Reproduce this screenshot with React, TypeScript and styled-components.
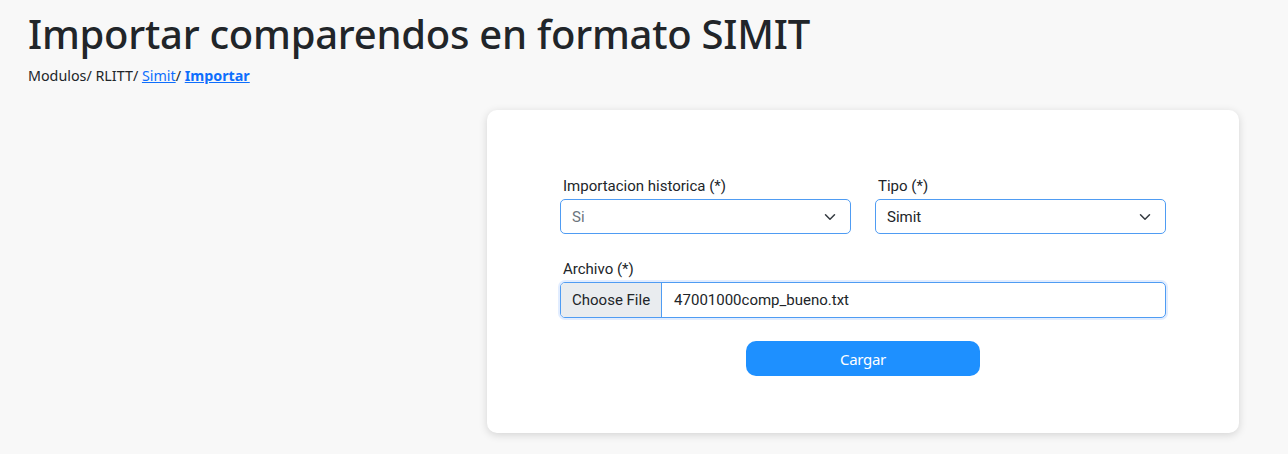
import styled, { createGlobalStyle } from "styled-components";

const GlobalStyle = createGlobalStyle`
  html, body {
    margin: 0;
    padding: 0;
    background: #f8f8f8;
  }
  body {
    font-family: "Noto Sans", "Open Sans", sans-serif;
    color: #212529;
  }
  * {
    box-sizing: border-box;
  }
`;

const Page = styled.div`
  min-height: 454px;
  padding: 6px 49px 0 28px;
`;

const Title = styled.h1`
  margin: 0;
  font-family: "Noto Sans", sans-serif;
  font-weight: 500;
  font-size: 40px;
  line-height: 56px;
  color: #212529;
  letter-spacing: -0.25px;
`;

const Breadcrumb = styled.div`
  margin-top: 4px;
  font-family: "Noto Sans", sans-serif;
  font-size: 14.3px;
  line-height: 20px;
  color: #212529;
`;

const Crumb = styled.a<{ $current?: boolean }>`
  color: #0d6efd;
  text-decoration: underline;
  font-weight: ${(p) => (p.$current ? 700 : 400)};
  cursor: pointer;
`;

const Content = styled.div`
  display: flex;
  justify-content: flex-end;
  margin-top: 24px;
`;

const Card = styled.div`
  width: 752px;
  background: #ffffff;
  border-radius: 10px;
  box-shadow: 0 2px 8px rgba(0, 0, 0, 0.15);
  padding: 66px 73px 57px;
  font-family: Roboto, sans-serif;
`;

const Row = styled.div`
  display: grid;
  grid-template-columns: 1fr 1fr;
  column-gap: 24px;
`;

const Field = styled.div<{ $span?: boolean }>`
  display: flex;
  flex-direction: column;
  grid-column: ${(p) => (p.$span ? "1 / -1" : "auto")};
  margin-bottom: ${(p) => (p.$span ? "24px" : "25px")};
`;

const Label = styled.label`
  font-size: 15px;
  line-height: 20px;
  color: #212529;
  padding-left: 3px;
  margin-bottom: 3px;
`;

const SelectBox = styled.div<{ $muted?: boolean }>`
  height: 35px;
  border: 1px solid #4f9cf3;
  border-radius: 5px;
  display: flex;
  align-items: center;
  justify-content: space-between;
  padding: 0 14px 0 11px;
  font-size: 15px;
  color: ${(p) => (p.$muted ? "#6c757d" : "#212529")};
  background: #fff;
`;

const FileBox = styled.div`
  height: 36px;
  border: 1px solid #4f9cf3;
  border-radius: 5px;
  box-shadow: 0 0 0 2px rgba(13, 110, 253, 0.12);
  display: flex;
  align-items: stretch;
  overflow: hidden;
  font-size: 15px;
  background: #fff;
`;

const FileButton = styled.div`
  background: #e9ecef;
  border-right: 1px solid #4f9cf3;
  padding: 0 11px;
  display: flex;
  align-items: center;
  color: #212529;
`;

const FileName = styled.div`
  display: flex;
  align-items: center;
  padding-left: 12px;
  color: #212529;
`;

const Actions = styled.div`
  display: flex;
  justify-content: center;
  margin-top: -1px;
`;

const SubmitButton = styled.button`
  width: 234px;
  height: 35px;
  border: none;
  border-radius: 10px;
  background: #1e90ff;
  color: #fff;
  font-family: "Noto Sans", sans-serif;
  font-size: 15px;
  letter-spacing: -0.3px;
  cursor: pointer;
`;

const Chevron = () => (
  <svg width="12" height="12" viewBox="0 0 16 16" fill="none">
    <path
      d="M2 5l6 6 6-6"
      stroke="#343a40"
      strokeWidth="2"
      strokeLinecap="round"
      strokeLinejoin="round"
    />
  </svg>
);

export default function App() {
  return (
    <>
      <GlobalStyle />
      <Page>
        <Title>Importar comparendos en formato SIMIT</Title>
        <Breadcrumb>
          Modulos/ RLITT/ <Crumb>Simit</Crumb>/ <Crumb $current>Importar</Crumb>
        </Breadcrumb>
        <Content>
          <Card>
            <Row>
              <Field>
                <Label>Importacion historica (*)</Label>
                <SelectBox $muted>
                  <span>Si</span>
                  <Chevron />
                </SelectBox>
              </Field>
              <Field>
                <Label>Tipo (*)</Label>
                <SelectBox>
                  <span>Simit</span>
                  <Chevron />
                </SelectBox>
              </Field>
              <Field $span>
                <Label>Archivo (*)</Label>
                <FileBox>
                  <FileButton>Choose File</FileButton>
                  <FileName>47001000comp_bueno.txt</FileName>
                </FileBox>
              </Field>
            </Row>
            <Actions>
              <SubmitButton>Cargar</SubmitButton>
            </Actions>
          </Card>
        </Content>
      </Page>
    </>
  );
}
